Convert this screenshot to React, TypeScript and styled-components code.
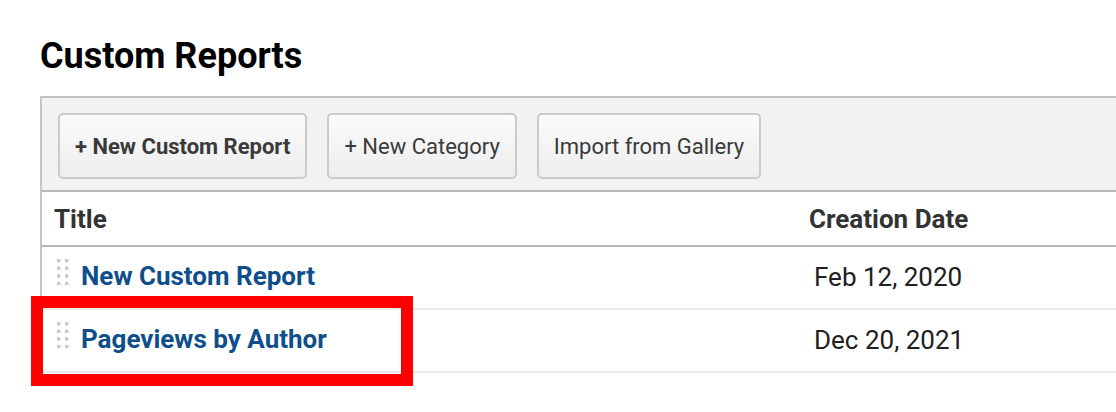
import React from "react";
import styled, { createGlobalStyle } from "styled-components";

const GlobalStyle = createGlobalStyle`
  html, body {
    margin: 0;
    padding: 0;
    background: #ffffff;
    overflow: hidden;
  }
  body {
    font-family: Roboto, "Liberation Sans", Arial, sans-serif;
  }
`;

const Page = styled.div`
  width: 1116px;
  height: 412px;
  padding: 36px 0 0 40px;
  box-sizing: border-box;
  overflow: hidden;
`;

const Heading = styled.h1`
  margin: 0 0 20px;
  font-size: 36px;
  line-height: 40px;
  font-weight: 700;
  color: #000;
`;

const Panel = styled.section`
  width: 1150px;
  border-left: 2px solid #c6c6c6;
  box-sizing: border-box;
`;

const Toolbar = styled.div`
  display: flex;
  gap: 20px;
  padding: 15px 16px 11px 16px;
  background: #f2f2f2;
  border-top: 2px solid #c2c2c2;
  border-bottom: 2px solid #b6b6b6;
`;

const ToolButton = styled.button<{ $bold?: boolean }>`
  height: 66px;
  padding: 0 15px;
  box-sizing: border-box;
  border: 2px solid #cacaca;
  border-radius: 5px;
  background: linear-gradient(#fbfbfb, #ededed);
  font-family: Roboto, "Liberation Sans", Arial, sans-serif;
  font-size: 22px;
  font-weight: ${(p) => (p.$bold ? 700 : 400)};
  color: #3a3a3a;
  cursor: pointer;
`;

const Grid = styled.div<{ $header?: boolean }>`
  position: relative;
  display: grid;
  grid-template-columns: 755px 1fr;
  height: ${(p) => (p.$header ? "53px" : "61px")};
  border-bottom: 2px solid ${(p) => (p.$header ? "#b6b6b6" : "#ebebeb")};
  align-items: center;
`;

const HeadCell = styled.div`
  padding-left: 12px;
  font-size: 26px;
  line-height: 30px;
  font-weight: 700;
  color: #333;
`;

const TitleCell = styled.div`
  position: relative;
  display: flex;
  align-items: flex-start;
  align-self: stretch;
  padding: 12px 0 0 15px;
  gap: 12px;
`;

const ReportLink = styled.a`
  margin-top: 2px;
  font-size: 26px;
  line-height: 30px;
  font-weight: 700;
  color: #0e4f8b;
  text-decoration: none;
`;

const DateCell = styled.div`
  padding-left: 17px;
  font-size: 26px;
  line-height: 30px;
  margin-bottom: 2px;
  color: #202020;
`;

const Highlight = styled.div`
  position: absolute;
  left: -11px;
  top: -14px;
  width: 382px;
  height: 90px;
  border: 12px solid #ff0000;
  box-sizing: border-box;
  pointer-events: none;
`;

const Grip = () => (
  <svg width="12" height="27" viewBox="0 0 12 27" aria-hidden="true">
    {[0, 1, 2, 3].map((r) =>
      [0, 1].map((c) => (
        <rect
          key={`${r}-${c}`}
          x={c * 8}
          y={r * 7.6}
          width="3.4"
          height="3.4"
          fill="#c8c8c8"
        />
      ))
    )}
  </svg>
);

const reports = [
  { title: "New Custom Report", date: "Feb 12, 2020", highlighted: false },
  { title: "Pageviews by Author", date: "Dec 20, 2021", highlighted: true },
];

export default function App() {
  return (
    <>
      <GlobalStyle />
      <Page>
        <Heading>Custom Reports</Heading>
        <Panel>
          <Toolbar>
            <ToolButton $bold>+ New Custom Report</ToolButton>
            <ToolButton>+ New Category</ToolButton>
            <ToolButton>Import from Gallery</ToolButton>
          </Toolbar>
          <Grid $header>
            <HeadCell>Title</HeadCell>
            <HeadCell>Creation Date</HeadCell>
          </Grid>
          {reports.map((r) => (
            <Grid key={r.title}>
              <TitleCell>
                <Grip />
                <ReportLink href="#">{r.title}</ReportLink>
                {r.highlighted && <Highlight />}
              </TitleCell>
              <DateCell>{r.date}</DateCell>
            </Grid>
          ))}
        </Panel>
      </Page>
    </>
  );
}
